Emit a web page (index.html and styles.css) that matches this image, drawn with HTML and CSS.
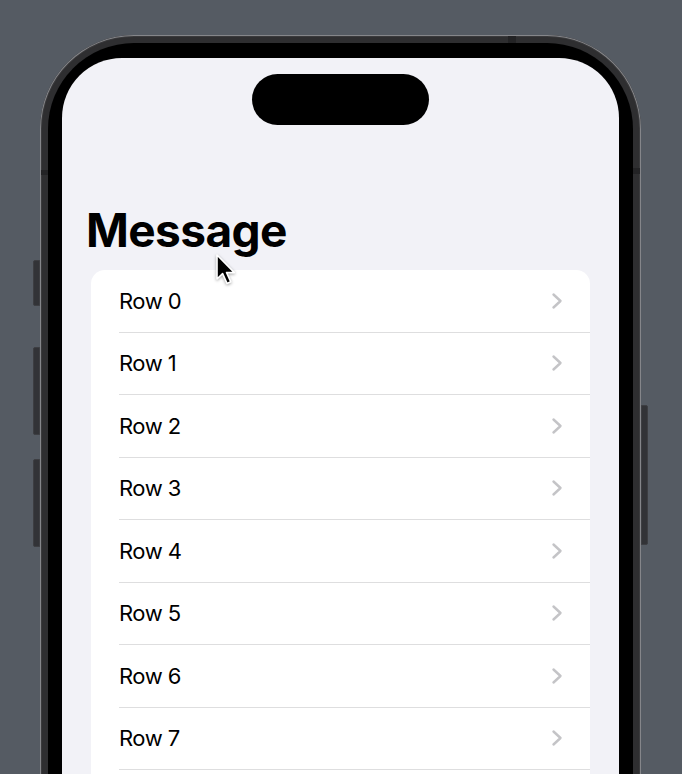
FILE: index.html
```html
<!DOCTYPE html>
<html>
<head>
<meta charset="utf-8">
<link rel="stylesheet" href="styles.css">
</head>
<body>
<div class="stage">
  <div class="phone">
    <div class="btn btn-action"></div>
    <div class="btn btn-volup"></div>
    <div class="btn btn-voldown"></div>
    <div class="btn btn-power"></div>
    <div class="band band-left"></div>
    <div class="band band-right"></div>
    <div class="band band-top"></div>
    <div class="bezel">
      <div class="screen">
        <div class="island"></div>
        <h1 class="title">Message</h1>
        <div class="card">
          <div class="row"><div class="row-inner"><span class="label">Row 0</span><svg class="chev" viewBox="0 0 12 18"><polyline points="2.5,2.5 9.5,9 2.5,15.5"/></svg></div></div>
          <div class="row"><div class="row-inner"><span class="label">Row 1</span><svg class="chev" viewBox="0 0 12 18"><polyline points="2.5,2.5 9.5,9 2.5,15.5"/></svg></div></div>
          <div class="row"><div class="row-inner"><span class="label">Row 2</span><svg class="chev" viewBox="0 0 12 18"><polyline points="2.5,2.5 9.5,9 2.5,15.5"/></svg></div></div>
          <div class="row"><div class="row-inner"><span class="label">Row 3</span><svg class="chev" viewBox="0 0 12 18"><polyline points="2.5,2.5 9.5,9 2.5,15.5"/></svg></div></div>
          <div class="row"><div class="row-inner"><span class="label">Row 4</span><svg class="chev" viewBox="0 0 12 18"><polyline points="2.5,2.5 9.5,9 2.5,15.5"/></svg></div></div>
          <div class="row"><div class="row-inner"><span class="label">Row 5</span><svg class="chev" viewBox="0 0 12 18"><polyline points="2.5,2.5 9.5,9 2.5,15.5"/></svg></div></div>
          <div class="row"><div class="row-inner"><span class="label">Row 6</span><svg class="chev" viewBox="0 0 12 18"><polyline points="2.5,2.5 9.5,9 2.5,15.5"/></svg></div></div>
          <div class="row"><div class="row-inner"><span class="label">Row 7</span><svg class="chev" viewBox="0 0 12 18"><polyline points="2.5,2.5 9.5,9 2.5,15.5"/></svg></div></div>
        </div>
      </div>
    </div>
  </div>
  <svg class="cursor" viewBox="0 0 24 34" width="24" height="34">
    <path d="M2,2 L2,26 L7.6,20.6 L12,30.4 L15.8,28.8 L11.6,19.6 L19.4,19.6 Z"/>
  </svg>
</div>
</body>
</html>
```

FILE: styles.css
```css
html, body {
  margin: 0;
  padding: 0;
  width: 682px;
  height: 774px;
  overflow: hidden;
  background: #555b63;
}

.stage {
  position: relative;
  width: 682px;
  height: 774px;
  overflow: hidden;
}

.phone {
  position: relative;
  margin: 35px 0 0 40px;
  width: 601px;
  height: 1000px;
  box-sizing: border-box;
  padding: 8px;
  border-radius: 94px;
  background: #2e2e30;
  box-shadow: inset 0 0 0 1px #85868a, inset 0 0 0 2px #3a3a3c;
}

.btn {
  position: absolute;
  width: 7px;
  background: #323337;
  border: 1px solid #3d3e42;
  box-sizing: border-box;
}
.btn-action { left: -7px; top: 225px; height: 46px; border-radius: 2px 0 0 2px; }
.btn-volup { left: -7px; top: 312px; height: 88px; border-radius: 2px 0 0 2px; }
.btn-voldown { left: -7px; top: 424px; height: 88px; border-radius: 2px 0 0 2px; }
.btn-power { right: -7px; top: 370px; height: 140px; border-radius: 0 2px 2px 0; }

.band {
  position: absolute;
  background: #232325;
}
.band-left { left: 1px; top: 135px; width: 7px; height: 5px; }
.band-right { right: 1px; top: 133px; width: 7px; height: 6px; }
.band-top { left: 468px; top: 1px; width: 8px; height: 7px; }

.bezel {
  height: 100%;
  box-sizing: border-box;
  padding: 15px 14px 0 14px;
  background: #000;
  border-radius: 86px;
}

.screen {
  height: 100%;
  background: #f2f2f7;
  border-radius: 60px;
  overflow: hidden;
  display: flex;
  flex-direction: column;
}

.island {
  width: 177px;
  height: 51px;
  margin: 16px auto 0;
  border-radius: 26px;
  background: #000;
  flex: none;
}

.title {
  margin: 77px 0 0 0;
  padding-left: 24px;
  font-family: Inter, "Liberation Sans", sans-serif;
  font-weight: 700;
  font-size: 46px;
  line-height: 56px;
  letter-spacing: -0.6px;
  color: #000;
}

.card {
  margin: 12px 29px 0;
  padding-bottom: 60px;
  background: #fff;
  border-radius: 14px 14px 0 0;
}

.row {
  padding-left: 28px;
}

.row-inner {
  height: 61.5px;
  border-bottom: 1px solid #dededf;
  display: flex;
  align-items: center;
  justify-content: space-between;
  padding-right: 27px;
}

.label {
  font-family: Inter, "Liberation Sans", sans-serif;
  font-size: 22px;
  letter-spacing: -0.5px;
  color: #000;
}

.chev {
  width: 12px;
  height: 18px;
  fill: none;
  stroke: #c4c4c7;
  stroke-width: 2.4;
  stroke-linecap: round;
  stroke-linejoin: round;
}

.cursor {
  position: absolute;
  left: 215px;
  top: 253px;
  filter: drop-shadow(0 1px 1.5px rgba(0,0,0,0.35));
}
.cursor path {
  fill: #000;
  stroke: #fff;
  stroke-width: 1.6;
  stroke-linejoin: round;
}
```
